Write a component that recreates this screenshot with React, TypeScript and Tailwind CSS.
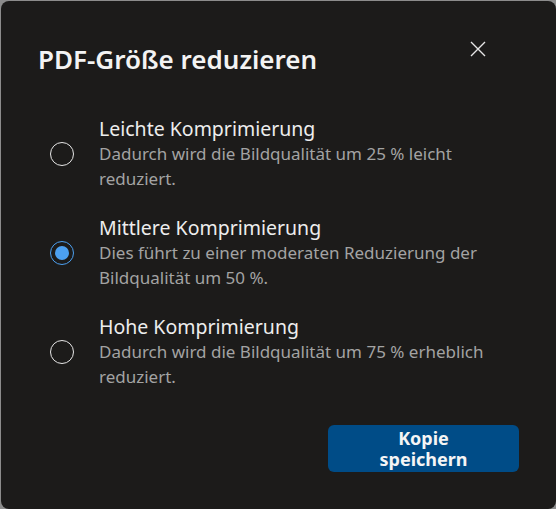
import React, { useState } from "react";

type Option = {
  id: string;
  title: string;
  description: string;
};

const options: Option[] = [
  {
    id: "low",
    title: "Leichte Komprimierung",
    description: "Dadurch wird die Bildqualität um 25 % leicht reduziert.",
  },
  {
    id: "medium",
    title: "Mittlere Komprimierung",
    description:
      "Dies führt zu einer moderaten Reduzierung der Bildqualität um 50 %.",
  },
  {
    id: "high",
    title: "Hohe Komprimierung",
    description: "Dadurch wird die Bildqualität um 75 % erheblich reduziert.",
  },
];

const Radio: React.FC<{ checked: boolean }> = ({ checked }) =>
  checked ? (
    <span className="flex h-6 w-6 shrink-0 items-center justify-center rounded-full border-[1.5px] border-[#4ca0f0]">
      <span className="h-[14px] w-[14px] rounded-full bg-[#4ca0f0]" />
    </span>
  ) : (
    <span className="h-6 w-6 shrink-0 rounded-full border-[1.5px] border-[#e6e6e6]" />
  );

const App: React.FC = () => {
  const [selected, setSelected] = useState("medium");

  return (
    <div className="h-[509px] w-[556px] bg-[#8c8c8c] pl-px pt-px">
      <div
        className="flex h-full w-full flex-col rounded-lg bg-[#1c1b1a] pl-[37px] pr-[37px] pt-[36px] text-white"
        style={{ fontFamily: '"Noto Sans", "Open Sans", sans-serif' }}
      >
        {/* Header */}
        <div className="flex items-start justify-between">
          <h1 className="text-[26px] font-semibold leading-[44px] text-[#f3f3f3]">
            PDF-Größe reduzieren
          </h1>
          <button className="mr-[31px] mt-[2px] flex h-5 w-5 items-center justify-center text-[#e6e6e6]">
            <svg width="18" height="18" viewBox="0 0 18 18" fill="none">
              <path
                d="M2 2L16 16M16 2L2 16"
                stroke="currentColor"
                strokeWidth="1.4"
              />
            </svg>
          </button>
        </div>

        {/* Options */}
        <div className="mt-[36px] flex flex-col gap-[25px]">
          {options.map((o) => (
            <label
              key={o.id}
              className="flex cursor-pointer items-center gap-[25px] pl-3"
              onClick={() => setSelected(o.id)}
            >
              <Radio checked={selected === o.id} />
              <div className="w-[385px]">
                <div className="text-[19.5px] leading-[24px] text-[#ededed]">
                  {o.title}
                </div>
                <div className="text-[17px] leading-[25px] text-[#a3a3a3]">
                  {o.description}
                </div>
              </div>
            </label>
          ))}
        </div>

        {/* Footer */}
        <div className="mt-auto mb-[37px] flex justify-end">
          <button className="flex h-[47px] w-[191px] items-start justify-center overflow-hidden rounded-md bg-[#004c87] pt-[3px]">
            <span className="w-min text-[18px] font-bold leading-[21px] text-[#f5f5f5]">
              Kopie speichern
            </span>
          </button>
        </div>
      </div>
    </div>
  );
};

export default App;
